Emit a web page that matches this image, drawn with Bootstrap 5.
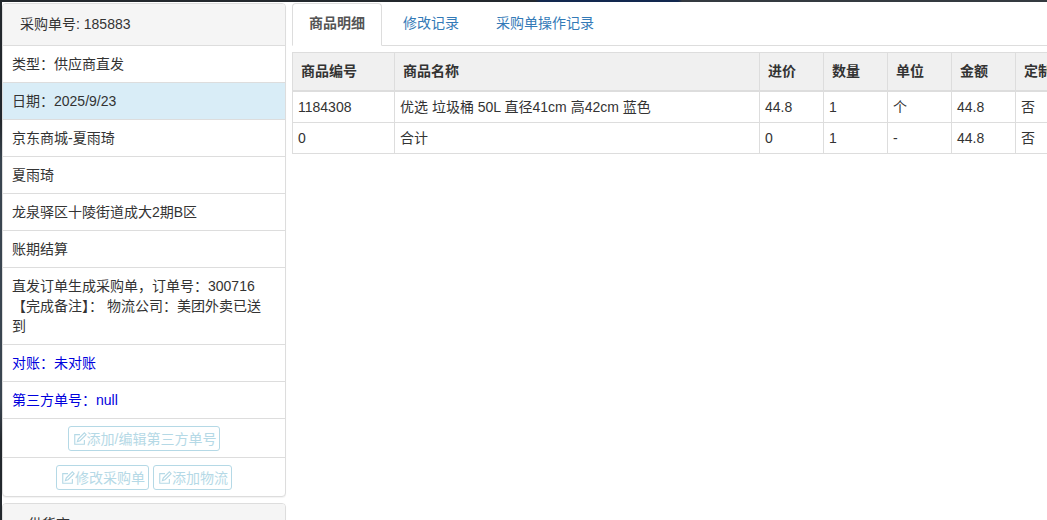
<!DOCTYPE html>
<html lang="zh">
<head>
<meta charset="utf-8">
<title>采购单</title>
<link rel="stylesheet" href="https://cdn.jsdelivr.net/npm/bootstrap@5.3.0/dist/css/bootstrap.min.css">
<style>
html,body{height:100%;overflow:hidden}
body{font-family:"Liberation Sans","Noto Sans CJK SC",sans-serif;font-size:14px;line-height:20px;color:#333;background:#fff}
.topstrip{height:2px;background:linear-gradient(90deg,#23282d 0,#23282d 535px,#12284f 540px,#12284f 678px,#343a40 682px,#343a40 100%)}
.pagewrap{height:518px;overflow:hidden}
.leftstrip{width:2px;flex:none;background:linear-gradient(180deg,#23282d 0,#23282d 120px,#3a4550 160px,#3a4550 400px,#23282d 440px,#23282d 100%)}
.pagebody{flex:1 1 auto;min-width:0;padding-top:1px;gap:6px}
.sidecol{width:284px;flex:none}
.mainpane{flex:1 1 auto;min-width:0;overflow:hidden}
.sidepanel{border:1px solid #ddd;border-radius:4px;margin-bottom:6px;box-shadow:0 1px 1px rgba(0,0,0,.05);background:#fff}
.sidehead{background:#f5f5f5;padding:10px 17px 11px;height:42px;border-bottom:1px solid #ddd;border-radius:3px 3px 0 0}
.headindent{padding-left:25px}
.sideitem{padding:8px 9px;border-bottom:1px solid #ddd}
.sideitem:last-child{border-bottom:0}
.itemactive{background:#d9edf7}
.itemblue{color:#00d}
.btnrow{padding:7px 9px 6px;display:flex;justify-content:center;gap:4px;border-bottom:1px solid #ddd;height:39px}
.btnrow:last-child{border-bottom:0;height:38px}
.fadedbtn{display:inline-flex;align-items:center;height:25px;padding:0 3px 0 4px;font-size:14px;line-height:20px;color:#b5d9e6;background:#fff;border:1px solid #b5d9e6;border-radius:3px}
.fadedbtn svg{width:14px;height:14px;flex:none}
.tabline{border-bottom:1px solid #ddd;height:43px;margin:0}
.tabline a{display:block;padding:9px 16px 10px;height:43px;margin-right:3px;color:#337ab7;text-decoration:none;border:1px solid transparent;border-radius:4px 4px 0 0}
.tabline .tabon{color:#555;font-weight:700;background:#fff;border-color:#ddd #ddd #fff;margin-right:4px}
.tablewrap{margin-top:6px;width:780px}
.datagrid{border-collapse:collapse;table-layout:fixed;width:780px}
.datagrid th,.datagrid td{border:1px solid #ddd;padding:5px;height:31px;font-weight:400;white-space:nowrap;overflow:hidden}
.datagrid th{background:#f0f0f0;font-weight:700;height:38px;padding:8px;padding-top:7px;border-bottom:2px solid #ddd}
</style>
</head>
<body>
<div class="topstrip"></div>
<div class="d-flex pagewrap">
  <div class="leftstrip"></div>
  <div class="d-flex pagebody">
  <div class="sidecol">
    <div class="sidepanel">
      <div class="sidehead">采购单号: 185883</div>
      <div class="sideitem">类型：供应商直发</div>
      <div class="sideitem itemactive">日期：2025/9/23</div>
      <div class="sideitem">京东商城-夏雨琦</div>
      <div class="sideitem">夏雨琦</div>
      <div class="sideitem">龙泉驿区十陵街道成大2期B区</div>
      <div class="sideitem">账期结算</div>
      <div class="sideitem">直发订单生成采购单，订单号：300716<br>【完成备注】： 物流公司：美团外卖已送<br>到</div>
      <div class="sideitem itemblue">对账：未对账</div>
      <div class="sideitem itemblue">第三方单号：null</div>
      <div class="btnrow"><span class="fadedbtn"><svg viewBox="0 0 16 16" fill="none" stroke="currentColor" stroke-width="1.3"><path d="M13 9v5H2V3h6"/><path d="M6 8l7-7 2 2-7 7-3 1z"/></svg>添加/编辑第三方单号</span></div>
      <div class="btnrow"><span class="fadedbtn"><svg viewBox="0 0 16 16" fill="none" stroke="currentColor" stroke-width="1.3"><path d="M13 9v5H2V3h6"/><path d="M6 8l7-7 2 2-7 7-3 1z"/></svg>修改采购单</span><span class="fadedbtn"><svg viewBox="0 0 16 16" fill="none" stroke="currentColor" stroke-width="1.3"><path d="M13 9v5H2V3h6"/><path d="M6 8l7-7 2 2-7 7-3 1z"/></svg>添加物流</span></div>
    </div>
    <div class="sidepanel"><div class="sidehead headindent">供货商</div></div>
  </div>
  <div class="mainpane">
    <div class="d-flex tabline">
      <a class="tabon" href="#">商品明细</a>
      <a href="#">修改记录</a>
      <a href="#">采购单操作记录</a>
    </div>
    <div class="tablewrap">
      <table class="datagrid">
        <colgroup><col style="width:102px"><col style="width:365px"><col style="width:64px"><col style="width:64px"><col style="width:64px"><col style="width:64px"><col style="width:64px"></colgroup>
        <thead><tr><th>商品编号</th><th>商品名称</th><th>进价</th><th>数量</th><th>单位</th><th>金额</th><th>定制</th></tr></thead>
        <tbody>
          <tr><td>1184308</td><td>优选 垃圾桶 50L 直径41cm 高42cm 蓝色</td><td>44.8</td><td>1</td><td>个</td><td>44.8</td><td>否</td></tr>
          <tr><td>0</td><td>合计</td><td>0</td><td>1</td><td>-</td><td>44.8</td><td>否</td></tr>
        </tbody>
      </table>
    </div>
  </div>
  </div>
</div>
<script src="https://cdn.jsdelivr.net/npm/bootstrap@5.3.0/dist/js/bootstrap.bundle.min.js"></script>
</body>
</html>
